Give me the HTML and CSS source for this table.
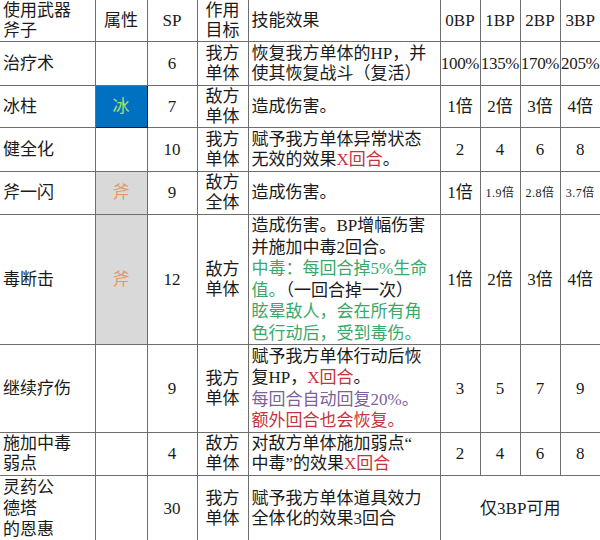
FILE: index.html
```html
<!DOCTYPE html>
<html lang="zh-CN">
<head>
<meta charset="utf-8">
<title>斧子技能表</title>
<link rel="stylesheet" href="styles.css">
</head>
<body>
<table class="skills">
  <colgroup>
    <col class="c-name"><col class="c-attr"><col class="c-sp"><col class="c-target"><col class="c-effect">
    <col class="c-bp"><col class="c-bp"><col class="c-bp"><col class="c-bp">
  </colgroup>
  <tr class="r-head">
    <td class="name">使用武器<br>斧子</td>
    <td class="mid">属性</td>
    <td class="mid">SP</td>
    <td class="mid">作用<br>目标</td>
    <td class="effect">技能效果</td>
    <td class="mid">0BP</td>
    <td class="mid">1BP</td>
    <td class="mid">2BP</td>
    <td class="mid">3BP</td>
  </tr>
  <tr class="r-44">
    <td class="name">治疗术</td>
    <td class="mid"></td>
    <td class="mid">6</td>
    <td class="mid">我方<br>单体</td>
    <td class="effect">恢复我方单体的HP，并<br>使其恢复战斗（复活）</td>
    <td class="mid tight">100%</td>
    <td class="mid tight">135%</td>
    <td class="mid tight">170%</td>
    <td class="mid tight">205%</td>
  </tr>
  <tr class="r-42">
    <td class="name">冰柱</td>
    <td class="mid ice">冰</td>
    <td class="mid">7</td>
    <td class="mid">敌方<br>单体</td>
    <td class="effect">造成伤害。</td>
    <td class="mid">1倍</td>
    <td class="mid">2倍</td>
    <td class="mid">3倍</td>
    <td class="mid">4倍</td>
  </tr>
  <tr class="r-44">
    <td class="name">健全化</td>
    <td class="mid"></td>
    <td class="mid">10</td>
    <td class="mid">我方<br>单体</td>
    <td class="effect">赋予我方单体异常状态<br>无效的效果<span class="red">X回合</span>。</td>
    <td class="mid">2</td>
    <td class="mid">4</td>
    <td class="mid">6</td>
    <td class="mid">8</td>
  </tr>
  <tr class="r-43">
    <td class="name">斧一闪</td>
    <td class="mid axe">斧</td>
    <td class="mid">9</td>
    <td class="mid">敌方<br>全体</td>
    <td class="effect">造成伤害。</td>
    <td class="mid">1倍</td>
    <td class="mid small">1.9倍</td>
    <td class="mid small">2.8倍</td>
    <td class="mid small">3.7倍</td>
  </tr>
  <tr class="r-130">
    <td class="name">毒断击</td>
    <td class="mid axe">斧</td>
    <td class="mid">12</td>
    <td class="mid">敌方<br>单体</td>
    <td class="effect tall">造成伤害。BP增幅伤害<br>并施加中毒2回合。<br><span class="green">中毒：每回合掉5%生命<br>值。</span>（一回合掉一次）<br><span class="green">眩晕敌人，会在所有角<br>色行动后，受到毒伤。</span></td>
    <td class="mid">1倍</td>
    <td class="mid">2倍</td>
    <td class="mid">3倍</td>
    <td class="mid">4倍</td>
  </tr>
  <tr class="r-88">
    <td class="name">继续疗伤</td>
    <td class="mid"></td>
    <td class="mid">9</td>
    <td class="mid">我方<br>单体</td>
    <td class="effect tall">赋予我方单体行动后恢<br>复HP，<span class="red">X回合</span>。<br><span class="purple">每回合自动回复20%。</span><br><span class="red">额外回合也会恢复。</span></td>
    <td class="mid">3</td>
    <td class="mid">5</td>
    <td class="mid">7</td>
    <td class="mid">9</td>
  </tr>
  <tr class="r-43">
    <td class="name">施加中毒<br>弱点</td>
    <td class="mid"></td>
    <td class="mid">4</td>
    <td class="mid">敌方<br>单体</td>
    <td class="effect">对敌方单体施加弱点“<br>中毒”的效果<span class="red">X回合</span></td>
    <td class="mid">2</td>
    <td class="mid">4</td>
    <td class="mid">6</td>
    <td class="mid">8</td>
  </tr>
  <tr class="r-68">
    <td class="name last">灵药公<br>德塔<br>的恩惠</td>
    <td class="mid"></td>
    <td class="mid">30</td>
    <td class="mid">我方<br>单体</td>
    <td class="effect">赋予我方单体道具效力<br>全体化的效果3回合</td>
    <td class="mid" colspan="4">仅3BP可用</td>
  </tr>
</table>
</body>
</html>
```

FILE: styles.css
```css
html, body {
  margin: 0;
  padding: 0;
  background: #ffffff;
  overflow: hidden;
}

.skills {
  width: 600px;
  table-layout: fixed;
  border-collapse: collapse;
  border-style: hidden;
  font-family: "Liberation Serif", "Noto Sans CJK SC", serif;
  font-size: 17px;
  line-height: 20px;
  color: #1a1a1a;
}

.c-name { width: 95px; }
.c-attr { width: 52px; }
.c-sp { width: 50px; }
.c-target { width: 51px; }
.c-effect { width: 192px; }
.c-bp { width: 40px; }

.skills td {
  border: 1px solid #6e6e6e;
  padding: 0 3px;
  vertical-align: middle;
  white-space: nowrap;
}

.skills td.tall { line-height: 21.5px; }
.skills td.last { line-height: 21px; }

.r-head td { height: 41px; }
.r-44 td { height: 43px; }
.r-42 td { height: 41px; }
.r-43 td { height: 42px; }
.r-130 td { height: 129px; }
.r-88 td { height: 87px; }
.r-68 td { height: 65px; }

.name { text-align: left; }
.effect { text-align: left; padding-left: 4px; }
.mid { text-align: center; }
.skills td.tight { padding: 0; letter-spacing: -0.3px; }
.skills td.small { padding: 0; font-size: 12px; letter-spacing: 0.5px; }

.skills td.ice {
  background: #0070c0;
  color: #a8e070;
  border-color: #1a1a1a;
}

.skills td.axe {
  background: #d9d9d9;
  color: #e0996a;
}

.green { color: #3aa86a; }
.red { color: #c8323c; }
.purple { color: #7d5f9e; }
```
